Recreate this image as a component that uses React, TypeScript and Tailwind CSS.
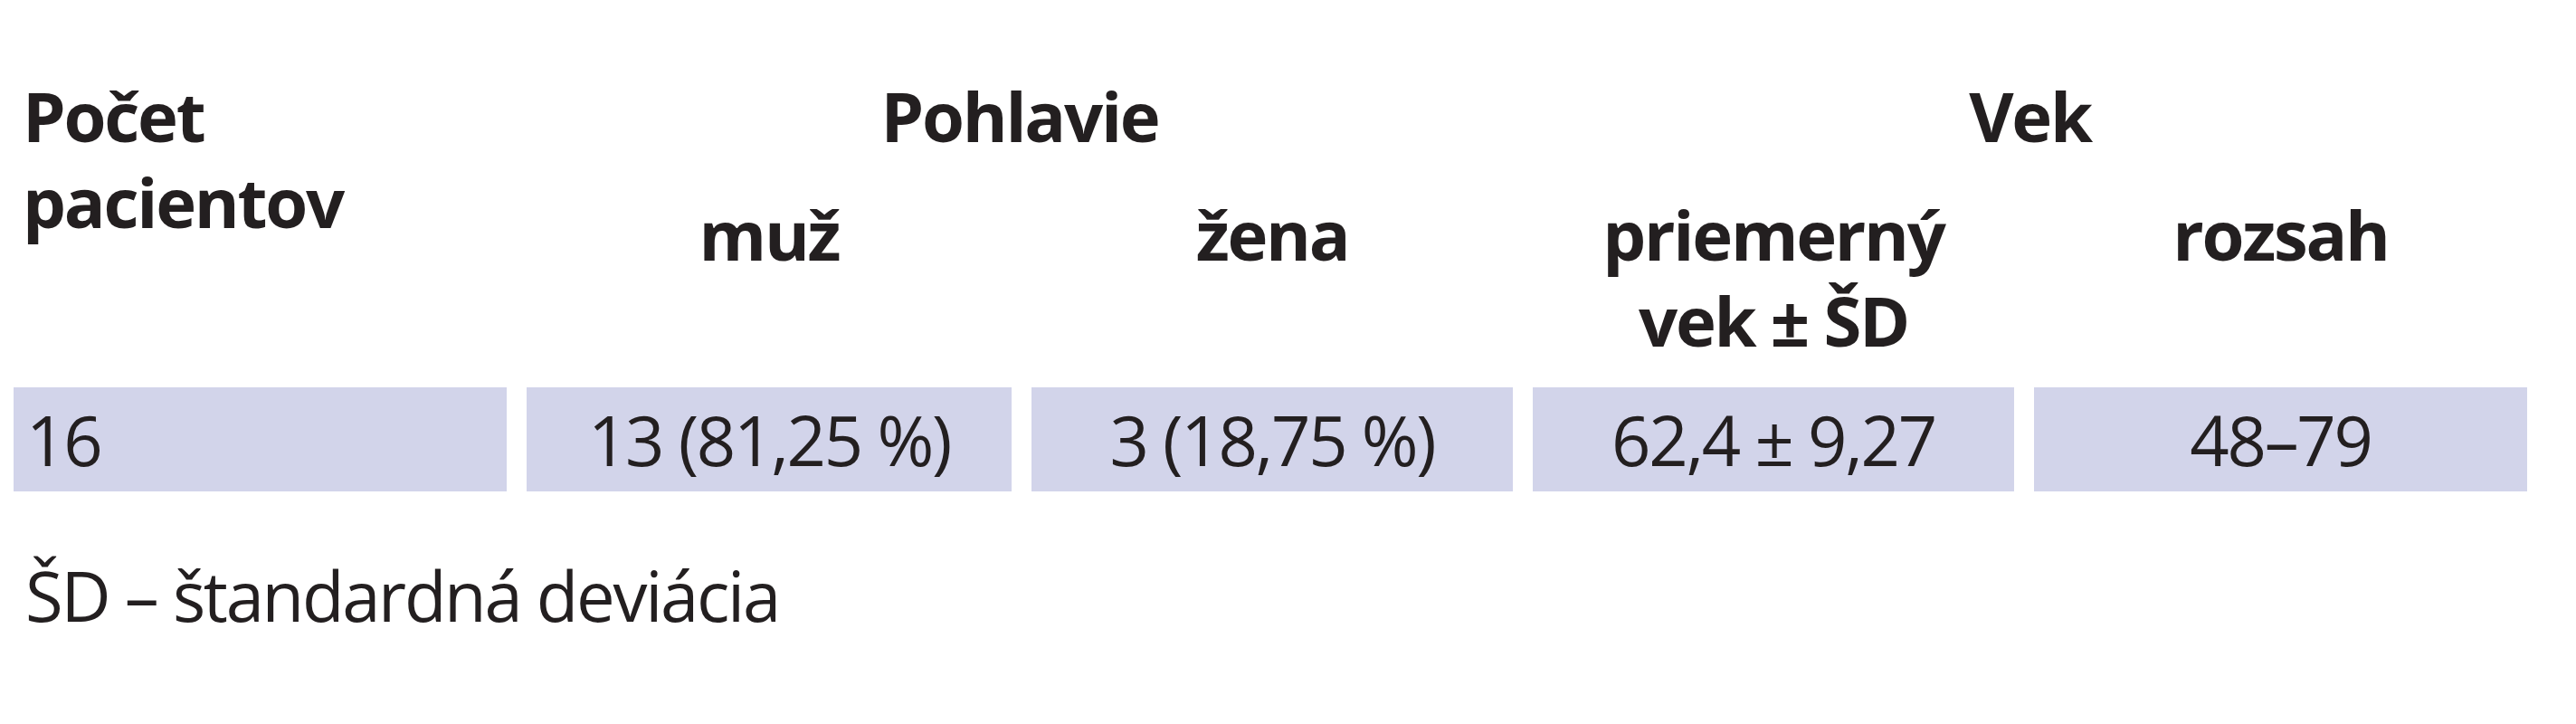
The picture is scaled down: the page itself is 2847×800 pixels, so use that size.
import React from "react";

const font = { fontFamily: '"Open Sans", "Noto Sans", sans-serif' };

export default function App() {
  return (
    <div
      className="w-[2847px] h-[800px] bg-white text-[#231f20] pt-[80px] text-[76px] leading-[95px] tracking-[-0.03em]"
      style={font}
    >
      <div className="ml-[15px] grid grid-cols-[545px_536px_532px_532px_545px] gap-x-[22px]">
        {/* Row A */}
        <div className="row-span-2 pl-[10px] font-bold">
          Počet
          <br />
          pacientov
        </div>
        <div className="col-span-2 pb-[36px] text-center font-bold">Pohlavie</div>
        <div className="col-span-2 pb-[36px] text-center font-bold">Vek</div>
        {/* Row B */}
        <div className="text-center font-bold">muž</div>
        <div className="text-center font-bold">žena</div>
        <div className="text-center font-bold">
          priemerný
          <br />
          vek ± ŠD
        </div>
        <div className="text-center font-bold">rozsah</div>
        {/* Row C */}
        <div className="mt-[27px] bg-[#d2d4ea] py-[10px] pl-[14px]">16</div>
        <div className="mt-[27px] bg-[#d2d4ea] py-[10px] text-center">13 (81,25 %)</div>
        <div className="mt-[27px] bg-[#d2d4ea] py-[10px] text-center">3 (18,75 %)</div>
        <div className="mt-[27px] bg-[#d2d4ea] py-[10px] text-center">62,4 ± 9,27</div>
        <div className="mt-[27px] bg-[#d2d4ea] py-[10px] text-center">48–79</div>
      </div>
      <div className="mt-[67px] pl-[28px]">ŠD – štandardná deviácia</div>
    </div>
  );
}
